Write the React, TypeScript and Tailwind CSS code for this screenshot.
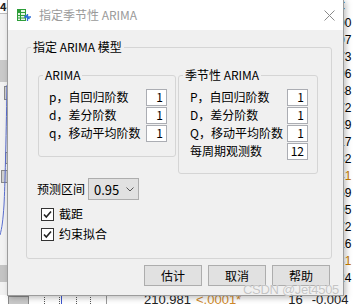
import React from "react";

const font = "font-['Noto_Sans_CJK_SC','Noto_Sans',sans-serif]";

type RowProps = { label: string; value: string };

function OrderRow({ label, value }: RowProps) {
  return (
    <div className="flex h-[18px] items-center justify-between">
      <span className="text-[12px] leading-[16px] text-black">{label}</span>
      <div className="flex h-[17px] w-[21px] items-center justify-end border border-[#abadb3] bg-white pr-[3px] text-[12px] leading-none text-black">
        {value}
      </div>
    </div>
  );
}

function Group({ title, className, children }: { title: string; className: string; children: React.ReactNode }) {
  return (
    <div className={`relative rounded-[3px] border border-[#d5d5d5] ${className}`}>
      <span className="absolute left-[4px] top-[-9px] bg-[#f0f0f0] px-[2px] text-[12px] leading-[16px] text-black">
        {title}
      </span>
      {children}
    </div>
  );
}

function Check({ label }: { label: string }) {
  return (
    <div className="flex h-[20px] items-center">
      <div className="flex h-[13px] w-[13px] items-center justify-center border border-[#333] bg-white">
        <svg width="11" height="11" viewBox="0 0 11 11">
          <path d="M2 5.5 L4.3 8 L9 2.5" fill="none" stroke="#222" strokeWidth="1.6" />
        </svg>
      </div>
      <span className="ml-[5px] text-[12px] leading-[16px] text-black">{label}</span>
    </div>
  );
}

function Button({ label }: { label: string }) {
  return (
    <button className="flex h-[21px] w-[58px] items-center justify-center border border-[#adadad] bg-[#e1e1e1] text-[12px] leading-none text-black">
      {label}
    </button>
  );
}

const rightDigits = ["€", "00", "07", "73", "96", "48", "72", "29", "17", "32", "41", "59", "95", "72", "16", "31", "24"];

export default function App() {
  return (
    <div className={`relative h-[304px] w-[353px] overflow-hidden bg-white ${font}`}>
      {/* window behind, left side */}
      <div className="absolute left-0 top-0 h-[304px] w-[8px] bg-[#f2f2f2]">
        <div className="h-[13px] bg-white text-[11px] font-bold leading-[13px] text-[#222]">4-</div>
        <div className="h-px bg-[#bdbdbd]" />
        <div className="mt-[46px] h-[22px] bg-[#c9c9c9]" />
        <div className="ml-[4px] mt-[4px] h-[14px] w-[4px] border border-[#8a8a8a] bg-[#d0d0d0]" />
        <div className="ml-[5px] mt-[52px] h-[12px] w-[3px] border border-[#8a8a8a] bg-[#d0d0d0]" />
        <div className="ml-[1px] mt-[6px] h-[13px] w-[7px] border border-[#8a8a8a] bg-[#d0d0d0]" />
        <div className="mt-[82px] h-[17px] bg-[#c4c4c4]" />
      </div>
      <svg className="absolute left-0 top-[85px]" width="8" height="150" viewBox="0 0 8 150">
        <path d="M7 0 C6 60 5 100 4 120 C3 135 2 143 0 150" fill="none" stroke="#5a6ed0" strokeWidth="1" />
      </svg>

      {/* window behind, right side */}
      <div className="absolute left-[338px] top-[-2px] w-[20px] font-['Liberation_Sans',sans-serif] text-[12px] leading-[17px] text-black">
        {rightDigits.map((d, i) => (
          <div key={i} className={i === 10 || i === 15 ? "text-[#c87b00]" : ""}>
            {d}
          </div>
        ))}
      </div>

      {/* window behind, bottom */}
      <div className="absolute left-0 top-[295px] flex h-[9px] w-[353px] items-start bg-white font-['Liberation_Sans',sans-serif] text-[13px] leading-[16px] text-[#222]">
        <div className="ml-[8px] mt-[1px] h-[10px] w-[21px] border border-[#8a8a8a] bg-[#c9c9c9]" />
        <div className="ml-[15px] h-[9px] border-l border-dotted border-[#555]" />
        <div className="ml-[14px] h-[9px] border-l border-dotted border-[#555]" />
        <div className="ml-[1px] h-[9px] border-l border-[#3b55d0]" />
        <div className="ml-[14px] h-[9px] border-l border-dotted border-[#555]" />
        <div className="ml-[13px] h-[9px] border-l border-dotted border-[#555]" />
        <div className="ml-[15px] h-[9px] border-l border-[#999]" />
        <span className="ml-[37px] mt-[-3px]">210.981</span>
        <span className="ml-[5px] mt-[-3px] text-[#d08a2a]">&lt;.0001*</span>
        <span className="ml-[47px] mt-[-3px]">16</span>
        <span className="ml-[9px] mt-[-3px]">-0.004</span>
      </div>

      {/* dialog */}
      <div className="absolute left-[7px] top-[-1px] flex h-[297px] w-[337px] flex-col border border-[#9c9c9c] bg-[#f0f0f0] shadow-[2px_2px_6px_rgba(0,0,0,0.25)]">
        <div className="flex h-[30px] items-center bg-white pl-[9px]">
          <svg width="15" height="13" viewBox="0 0 15 13">
            <rect x="0.5" y="0.5" width="8" height="11" fill="#e6f5e6" stroke="#2e9e3a" />
            <path d="M0.5 3.5 H8.5 M0.5 6.5 H8.5 M0.5 9 H8.5 M3.5 0.5 V11.5" stroke="#2e9e3a" strokeWidth="1" />
            <rect x="0.5" y="0.5" width="3" height="3" fill="#2e9e3a" />
            <path d="M7 8 L14 8 M10.5 5 L10.5 12 M8.5 6 L12.5 10" stroke="#2f6fd6" strokeWidth="1.3" />
          </svg>
          <span className="ml-[7px] text-[12px] leading-[16px] text-[#9a9a9a]">指定季节性 ARIMA</span>
          <svg className="ml-auto mr-[8px]" width="11" height="11" viewBox="0 0 11 11">
            <path d="M0.5 0.5 L10.5 10.5 M10.5 0.5 L0.5 10.5" stroke="#8a8a8a" strokeWidth="1" />
          </svg>
        </div>

        <Group title="指定 ARIMA 模型" className="ml-[18px] mt-[17px] h-[212px] w-[306px]">
          <div className="flex pl-[11px] pt-[27px]">
            <Group title="ARIMA" className="h-[82px] w-[138px] pl-[10px] pr-[8px] pt-[12px]">
              <OrderRow label="p，自回归阶数" value="1" />
              <OrderRow label="d，差分阶数" value="1" />
              <OrderRow label="q，移动平均阶数" value="1" />
            </Group>
            <Group title="季节性 ARIMA" className="ml-[2px] h-[99px] w-[140px] pl-[11px] pr-[9px] pt-[12px]">
              <OrderRow label="P，自回归阶数" value="1" />
              <OrderRow label="D，差分阶数" value="1" />
              <OrderRow label="Q，移动平均阶数" value="1" />
              <OrderRow label="每周期观测数" value="12" />
            </Group>
          </div>

          <div className="ml-[10px] mt-[4px] flex items-center">
            <span className="text-[12px] leading-[16px] text-black">预测区间</span>
            <div className="ml-[3px] flex h-[22px] w-[51px] items-center border border-[#adadad] bg-[#e1e1e1] pl-[5px] pr-[4px]">
              <span className="text-[13px] leading-none text-black">0.95</span>
              <svg className="ml-auto" width="8" height="5" viewBox="0 0 8 5">
                <path d="M0.5 0.5 L4 4 L7.5 0.5" fill="none" stroke="#555" strokeWidth="1" />
              </svg>
            </div>
          </div>

          <div className="ml-[14px] mt-[4px] flex flex-col">
            <Check label="截距" />
            <Check label="约束拟合" />
          </div>
        </Group>

        <div className="mt-[6px] flex justify-end gap-[6px] pr-[13px]">
          <Button label="估计" />
          <Button label="取消" />
          <Button label="帮助" />
        </div>
      </div>

      {/* watermark */}
      <span className="absolute left-[243px] top-[282px] font-['Liberation_Sans',sans-serif] text-[13px] leading-[16px] tracking-[-0.3px] text-[#c4c4c4] [text-shadow:0_0_1px_#ffffff]">
        CSDN @Jet4505
      </span>
    </div>
  );
}
